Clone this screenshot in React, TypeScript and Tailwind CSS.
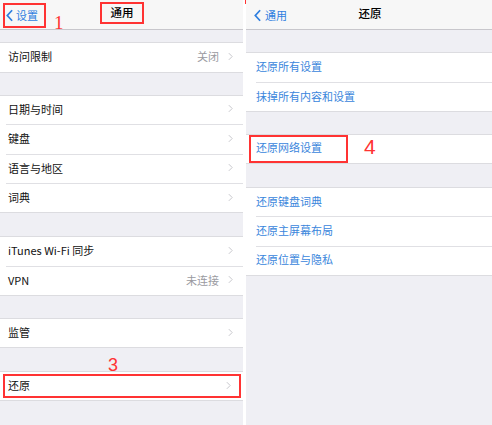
import type { ReactNode } from 'react'

const font = { fontFamily: '"Noto Sans CJK SC", "Noto Sans", sans-serif' }

function Chevron() {
  return (
    <svg viewBox="0 0 6 10" className="h-[9px] w-[5px] shrink-0" fill="none" stroke="#c7c7cc" strokeWidth="1.2">
      <path d="M1 1l4 4-4 4" />
    </svg>
  )
}

function BackChevron() {
  return (
    <svg viewBox="0 0 8 14" className="h-[13px] w-[7px] shrink-0" fill="none" stroke="#2f7fe0" strokeWidth="2">
      <path d="M7 1L1.5 7 7 13" />
    </svg>
  )
}

type RowProps = {
  label: string
  value?: string
  last?: boolean
  h: string
}

function LeftRow({ label, value, last, h }: RowProps) {
  return (
    <div className={`flex items-center bg-white pl-[6px] ${h}`}>
      <div className={`flex h-full flex-1 items-center pb-[2px] pl-[2px] pr-[10px] ${last ? '' : 'border-b border-[#e0e0e4]'}`}>
        <span className="flex-1 text-[11px] text-[#111]">{label}</span>
        {value && <span className="mr-[9px] text-[11px] text-[#9a9a9f]">{value}</span>}
        <Chevron />
      </div>
    </div>
  )
}

function Group({ children }: { children: ReactNode }) {
  return <div className="flex flex-col border-y border-[#dcdce0] bg-white">{children}</div>
}

function RightRow({ label, last, h }: { label: string; last?: boolean; h: string }) {
  return (
    <div className={`flex items-center bg-white pl-[10px] ${h}`}>
      <div className={`flex h-full flex-1 items-center pb-[2px] ${last ? '' : 'border-b border-[#e0e0e4]'}`}>
        <span className="text-[11px] text-[#3a86dc]">{label}</span>
      </div>
    </div>
  )
}

export default function App() {
  return (
    <div className="flex h-[425px] w-[492px] gap-[3px] overflow-hidden bg-white" style={font}>
      {/* Left: 通用 */}
      <section className="relative flex w-[243px] flex-col bg-[#efeff4]">
        <div className="relative flex h-[30px] items-center border-b border-[#c8c7cc] bg-[#f7f7f7]">
          <div className="ml-[3px] mt-[1px] flex h-[25px] w-[43px] items-center gap-[3px] border-2 border-[#ff3333] pl-[1px]">
            <BackChevron />
            <span className="text-[11px] text-[#2f7fe0]">设置</span>
          </div>
          <div className="ml-[54px] mt-[-3px] flex h-[22px] w-[44px] items-center justify-center border-2 border-[#ff3333]">
            <span className="text-[11.5px] font-medium text-black">通用</span>
          </div>
          <span className="absolute left-[54px] top-[13px] text-[19px] leading-none text-[#ff3333]" style={{ fontFamily: '"Liberation Serif", serif' }}>
            1
          </span>
        </div>

        <div className="h-[12px]" />
        <Group>
          <LeftRow label="访问限制" value="关闭" last h="h-[29px]" />
        </Group>

        <div className="h-[21.5px]" />
        <Group>
          <LeftRow label="日期与时间" h="h-[29.5px]" />
          <LeftRow label="键盘" h="h-[29.5px]" />
          <LeftRow label="语言与地区" h="h-[29.5px]" />
          <LeftRow label="词典" last h="h-[28px]" />
        </Group>

        <div className="h-[23px]" />
        <Group>
          <LeftRow label="iTunes Wi-Fi 同步" h="h-[29.5px]" />
          <LeftRow label="VPN" value="未连接" last h="h-[28.5px]" />
        </Group>

        <div className="h-[22px]" />
        <Group>
          <LeftRow label="监管" last h="h-[28px]" />
        </Group>

        <div className="relative h-[22.5px]">
          <span className="absolute left-[108px] top-[8px] text-[18px] leading-none text-[#ff3333]" style={{ fontFamily: '"Liberation Sans", sans-serif' }}>
            3
          </span>
        </div>
        <div className="flex h-[30px] flex-col border-y border-[#dcdce0] bg-white py-[2px] pl-[3px] pr-[2px]">
          <div className="flex h-full items-center border-2 border-[#ff3333] pb-[1px] pl-[3px] pr-[8px]">
            <span className="flex-1 text-[11px] text-[#111]">还原</span>
            <Chevron />
          </div>
        </div>
      </section>

      {/* Right: 还原 */}
      <section className="relative flex flex-1 flex-col bg-[#efeff4]">
        <div className="absolute left-[-1px] top-0 h-[4px] w-[3px] bg-[#ff3333]" />
        <div className="relative flex h-[30px] items-center justify-center border-b border-[#c8c7cc] bg-[#f7f7f7]">
          <div className="absolute left-[8px] top-[7px] flex items-center gap-[4px]">
            <BackChevron />
            <span className="text-[11px] text-[#2f7fe0]">通用</span>
          </div>
          <span className="ml-[2px] mt-[-2px] text-[11.5px] font-medium text-black">还原</span>
        </div>

        <div className="h-[22px]" />
        <Group>
          <RightRow label="还原所有设置" h="h-[29.5px]" />
          <RightRow label="抹掉所有内容和设置" last h="h-[28.5px]" />
        </Group>

        <div className="h-[21.5px]" />
        <div className="relative flex h-[30px] border-y border-[#dcdce0] bg-white pl-[3px]">
          <div className="flex w-[99px] items-center border-2 border-[#ff3333] pb-[2px] pl-[5px]">
            <span className="text-[11px] text-[#3a86dc]">还原网络设置</span>
          </div>
          <span className="absolute left-[118px] top-[1px] text-[21px] leading-none text-[#ff3333]" style={{ fontFamily: '"Liberation Sans", sans-serif' }}>
            4
          </span>
        </div>

        <div className="h-[23px]" />
        <Group>
          <RightRow label="还原键盘词典" h="h-[29.5px]" />
          <RightRow label="还原主屏幕布局" h="h-[29.5px]" />
          <RightRow label="还原位置与隐私" last h="h-[28px]" />
        </Group>
      </section>
    </div>
  )
}
